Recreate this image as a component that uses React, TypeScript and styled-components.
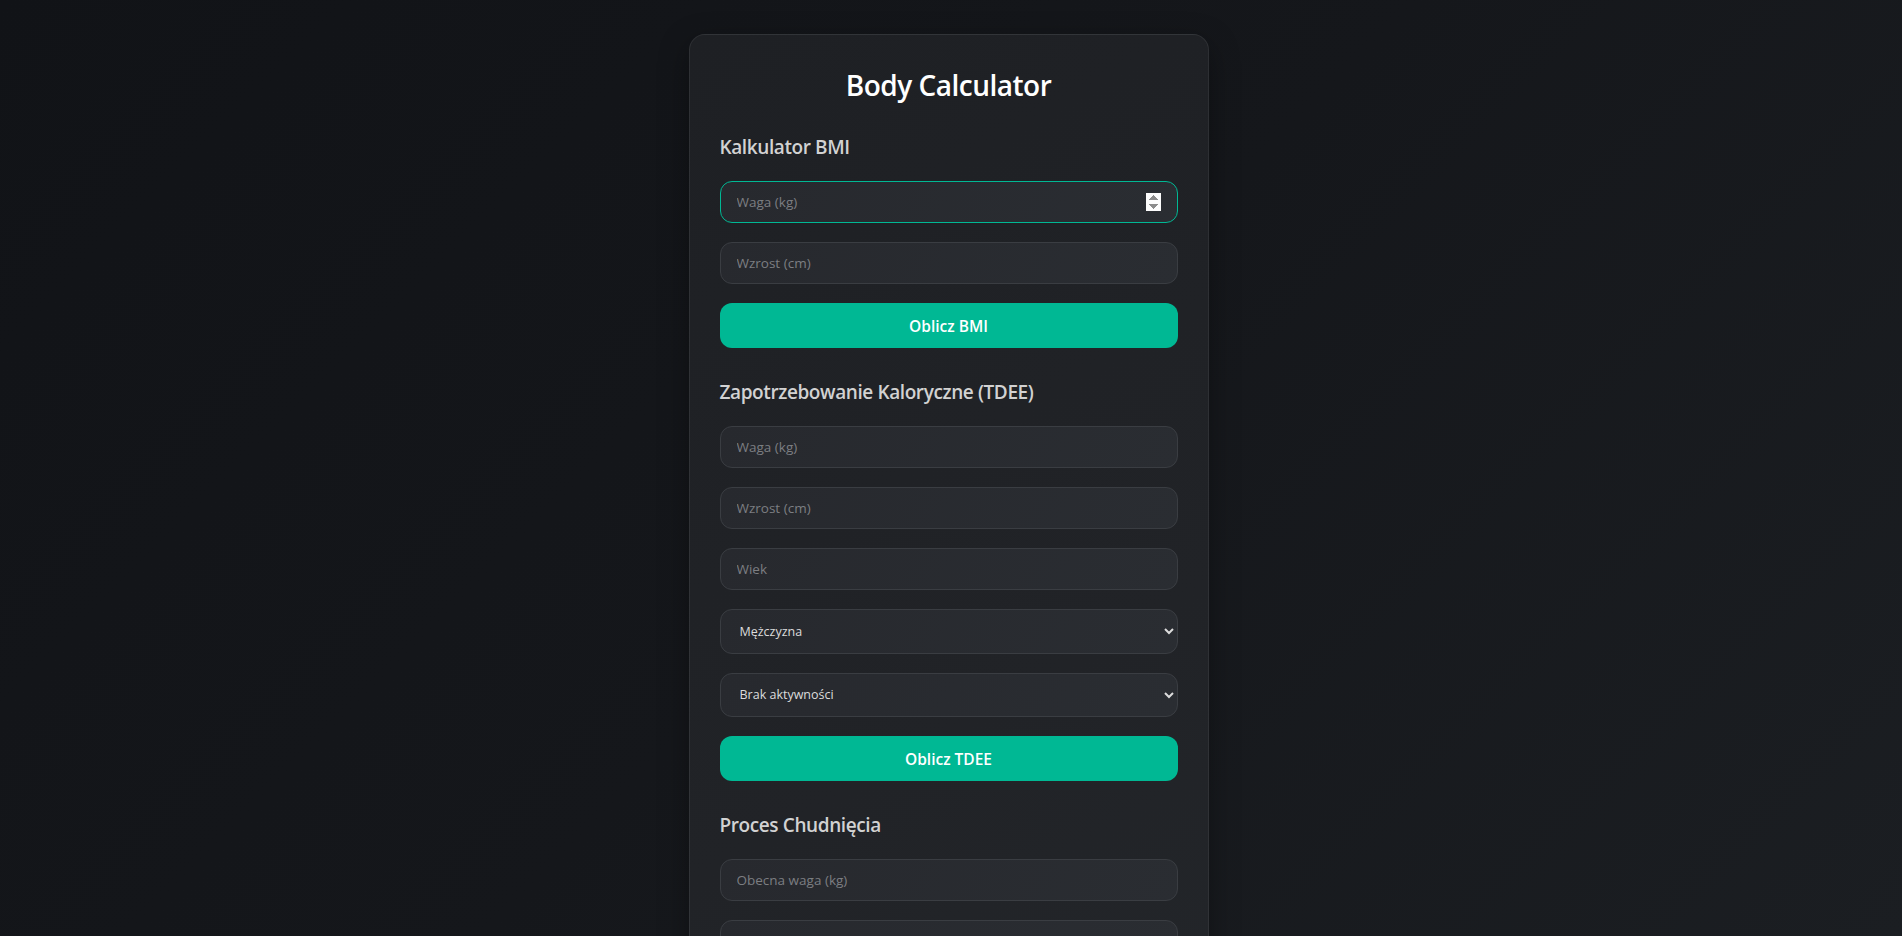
import React from "react";
import styled, { createGlobalStyle } from "styled-components";

const GlobalStyle = createGlobalStyle`
  html, body {
    margin: 0;
    padding: 0;
  }
  body {
    min-height: 100vh;
    background: linear-gradient(135deg, #111317 0%, #15171b 50%, #1b1e22 100%);
    background-attachment: fixed;
    font-family: "Open Sans", "Noto Sans", sans-serif;
    color: #e6e6e6;
  }
  * { box-sizing: border-box; }
`;

const Page = styled.main`
  display: flex;
  justify-content: center;
  padding: 34px 21px 40px 16px;
`;

const Card = styled.div`
  width: 520px;
  padding: 30px;
  border: 1px solid rgba(255, 255, 255, 0.07);
  border-radius: 16px;
  background: linear-gradient(150deg, #1e2024 0%, #212327 60%, #23262a 100%);
  box-shadow: 0 10px 30px rgba(0, 0, 0, 0.35);
`;

const Title = styled.h1`
  margin: 3px 0 33px;
  font-size: 28px;
  line-height: 34px;
  font-weight: 600;
  letter-spacing: -0.5px;
  text-align: center;
  color: #ffffff;
`;

const Section = styled.section`
  display: flex;
  flex-direction: column;
  gap: 19px;
  margin-bottom: 32px;
`;

const SectionTitle = styled.h2`
  margin: 0 0 3px;
  font-size: 19px;
  line-height: 24px;
  font-weight: 600;
  letter-spacing: -0.4px;
  color: #d2d2d2;
`;

const fieldBase = `
  width: 100%;
  border: 1px solid #3a3d42;
  border-radius: 12px;
  background: linear-gradient(120deg, #27292e 0%, #2a2d32 100%);
  font-family: "Open Sans", "Noto Sans", sans-serif;
  outline: none;
`;

const Input = styled.input`
  ${fieldBase}
  height: 42px;
  padding: 0 16px;
  font-size: 13.5px;
  color: #e6e6e6;
  &::placeholder {
    color: #7c7e82;
  }
  &:focus {
    border-color: #00b894;
  }
`;

const Select = styled.select`
  ${fieldBase}
  height: 44.5px;
  padding: 0 12px 0 15px;
  font-size: 12.5px;
  color: #dcdcdc;
`;

const Button = styled.button`
  height: 45px;
  width: 100%;
  border: none;
  border-radius: 12px;
  background: #00b894;
  color: #ffffff;
  font-family: "Open Sans", "Noto Sans", sans-serif;
  font-size: 15.5px;
  font-weight: 600;
  cursor: pointer;
`;

export default function App() {
  return (
    <>
      <GlobalStyle />
      <Page>
        <Card>
          <Title>Body Calculator</Title>
          <Section>
            <SectionTitle>Kalkulator BMI</SectionTitle>
            <Input type="number" placeholder="Waga (kg)" autoFocus />
            <Input type="number" placeholder="Wzrost (cm)" />
            <Button>Oblicz BMI</Button>
          </Section>
          <Section>
            <SectionTitle>Zapotrzebowanie Kaloryczne (TDEE)</SectionTitle>
            <Input type="number" placeholder="Waga (kg)" />
            <Input type="number" placeholder="Wzrost (cm)" />
            <Input type="number" placeholder="Wiek" />
            <Select defaultValue="m">
              <option value="m">Mężczyzna</option>
              <option value="k">Kobieta</option>
            </Select>
            <Select defaultValue="1.2">
              <option value="1.2">Brak aktywności</option>
              <option value="1.375">Niska aktywność</option>
              <option value="1.55">Średnia aktywność</option>
              <option value="1.725">Wysoka aktywność</option>
              <option value="1.9">Bardzo wysoka aktywność</option>
            </Select>
            <Button>Oblicz TDEE</Button>
          </Section>
          <Section>
            <SectionTitle>Proces Chudnięcia</SectionTitle>
            <Input type="number" placeholder="Obecna waga (kg)" />
            <Input type="number" placeholder="Docelowa waga (kg)" />
            <Input type="number" placeholder="Dzienne zapotrzebowanie (kcal)" />
            <Button>Oblicz</Button>
          </Section>
        </Card>
      </Page>
    </>
  );
}
